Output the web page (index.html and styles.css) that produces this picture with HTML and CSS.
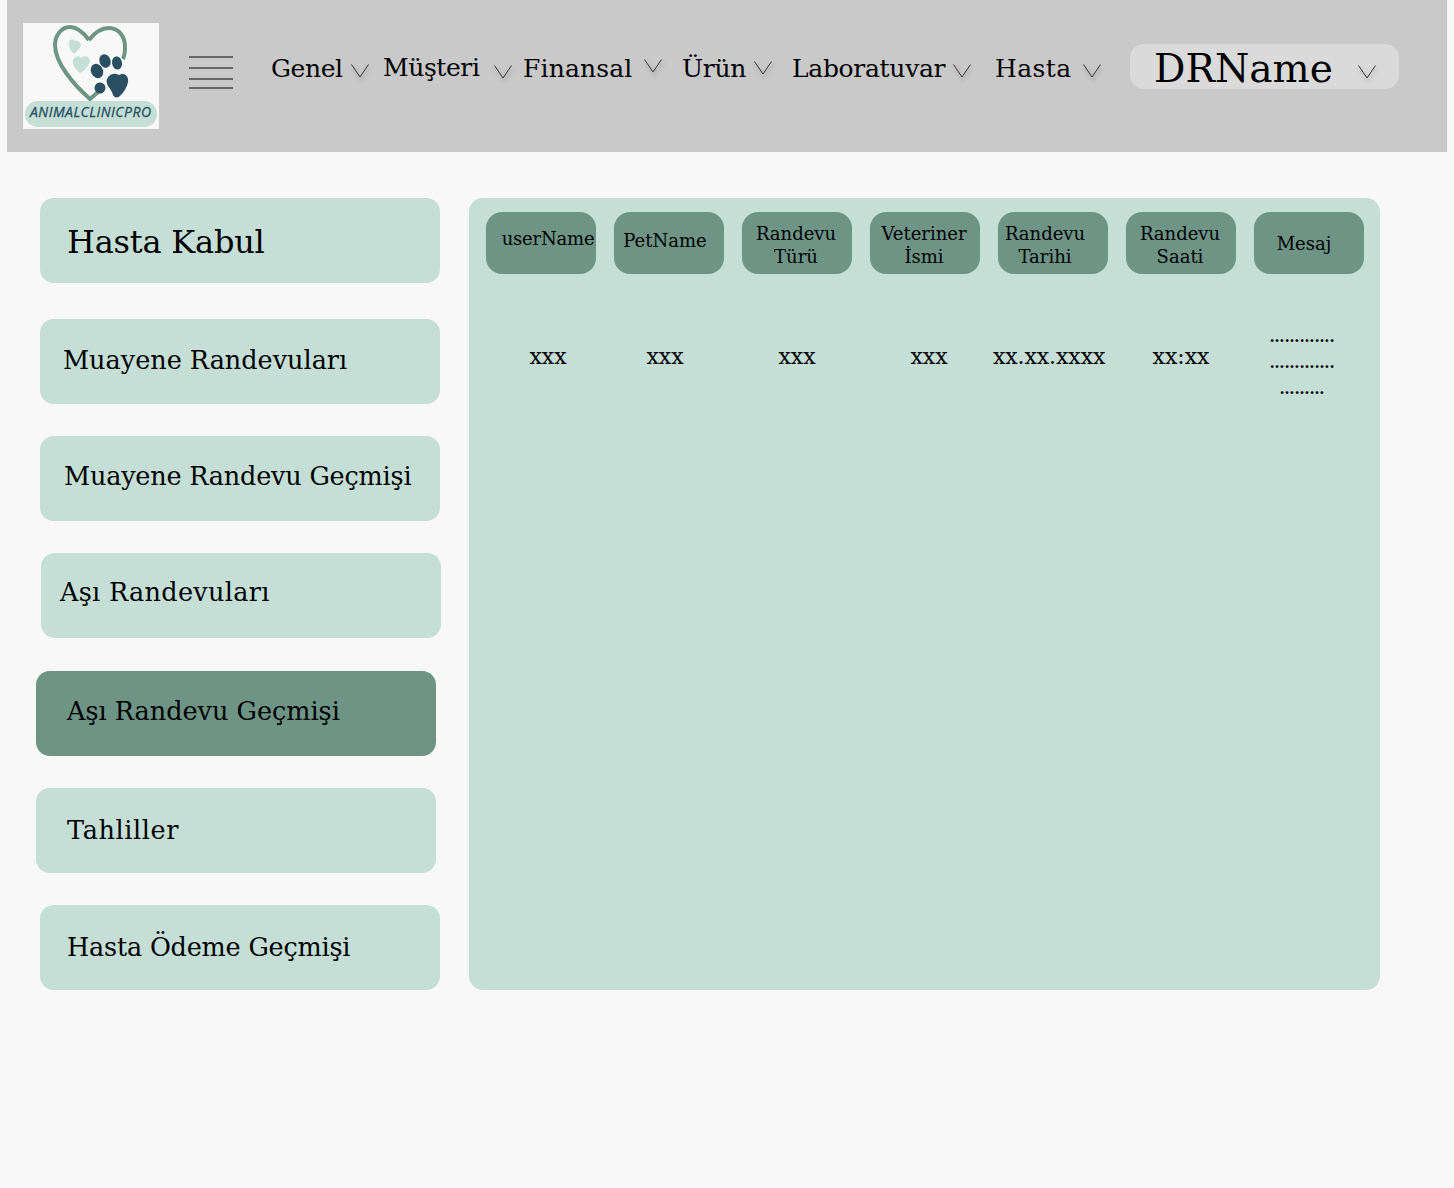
FILE: index.html
```html
<!DOCTYPE html>
<html lang="tr">
<head>
  <meta charset="UTF-8">
  <meta name="viewport" content="width=device-width, initial-scale=1.0">
  <title>AnimalClinicPro</title>
  <link rel="stylesheet" href="styles.css">
</head>
<body>
  <header class="topbar">
    <svg class="logo" width="136" height="106" viewBox="0 0 136 106">
      <rect width="136" height="106" fill="#f8f8f8"/>
      <path d="M66 17C60 9 54 4 47 4C38 4 32 13 32 22C32 40 51 62 67 76L75 69M66 17C72 9 79 5 86 5C96 5 102 14 102 24C102 28 102 32 100 36" fill="none" stroke="#6d9485" stroke-width="4"/>
      <path d="M51 31C47 27 45 23 46 19C47 16 50 16 52 18C54 17 57 18 58 21C58 25 54 28 51 31Z" fill="#c5dfd6"/>
      <path d="M57 50C52 46 49 41 50 37C51 33 56 32 58 35C61 32 66 33 67 37C67 42 62 47 57 50Z" fill="#c5dfd6"/>
      <ellipse cx="74" cy="48" rx="6" ry="7.5" transform="rotate(-25 74 48)" fill="#2a4f63"/>
      <ellipse cx="82" cy="38" rx="5.5" ry="7" transform="rotate(-20 82 38)" fill="#2a4f63"/>
      <ellipse cx="94" cy="40" rx="5" ry="6.5" transform="rotate(-10 94 40)" fill="#2a4f63"/>
      <ellipse cx="77" cy="65" rx="5.5" ry="5.5" transform="rotate(25 77 65)" fill="#2a4f63"/>
      <path d="M84 56C87 50 92 50 96 52C101 49 106 53 105 59C104 65 100 70 97 73C95 75 91 75 90 72C89 68 87 66 85 63C84 61 83 58 84 56Z" fill="#2a4f63"/>
      <rect x="2" y="78" width="132" height="26" rx="13" fill="#c5dfd6"/>
      <text class="logo-text" x="7" y="94" textLength="121" lengthAdjust="spacing">ANIMALCLINICPRO</text>
    </svg>
    <div class="burger"><span></span><span></span><span></span><span></span></div>
    <nav class="nav">
      <a class="nav-item genel">Genel<svg class="chev low" viewBox="0 0 18 14"><path d="M0.5 0.5L9 13L17.5 0.5"/></svg></a>
      <a class="nav-item musteri">Müşteri<svg class="chev lower" viewBox="0 0 18 14"><path d="M0.5 0.5L9 13L17.5 0.5"/></svg></a>
      <a class="nav-item finansal">Finansal<svg class="chev high" viewBox="0 0 18 14"><path d="M0.5 0.5L9 13L17.5 0.5"/></svg></a>
      <a class="nav-item urun">Ürün<svg class="chev" viewBox="0 0 18 14"><path d="M0.5 0.5L9 13L17.5 0.5"/></svg></a>
      <a class="nav-item lab">Laboratuvar<svg class="chev low" viewBox="0 0 18 14"><path d="M0.5 0.5L9 13L17.5 0.5"/></svg></a>
      <a class="nav-item hasta">Hasta<svg class="chev low" viewBox="0 0 18 14"><path d="M0.5 0.5L9 13L17.5 0.5"/></svg></a>
    </nav>
    <div class="user"><span class="user-name">DRName</span><svg class="chev user-chev" viewBox="0 0 18 14"><path d="M0.5 0.5L9 13L17.5 0.5"/></svg></div>
  </header>

  <div class="content">
    <aside class="side">
      <a class="side-item first">Hasta Kabul</a>
      <a class="side-item s2">Muayene Randevuları</a>
      <a class="side-item s3">Muayene Randevu Geçmişi</a>
      <a class="side-item s4">Aşı Randevuları</a>
      <a class="side-item s5 active">Aşı Randevu Geçmişi</a>
      <a class="side-item s6">Tahliller</a>
      <a class="side-item s7">Hasta Ödeme Geçmişi</a>
    </aside>
    <main class="panel">
      <div class="row heads">
        <div class="head h1">userName</div>
        <div class="head h2">PetName</div>
        <div class="head two h3">Randevu<br>Türü</div>
        <div class="head two h4">Veteriner<br>İsmi</div>
        <div class="head two h5">Randevu<br>Tarihi</div>
        <div class="head two h3">Randevu<br>Saati</div>
        <div class="head h7">Mesaj</div>
      </div>
      <div class="row cells">
        <div class="cell c1">xxx</div>
        <div class="cell c2">xxx</div>
        <div class="cell">xxx</div>
        <div class="cell c4">xxx</div>
        <div class="cell c5">xx.xx.xxxx</div>
        <div class="cell">xx:xx</div>
        <div class="cell msg">………….<br>………….<br>………</div>
      </div>
    </main>
  </div>
</body>
</html>
```

FILE: styles.css
```css
body { margin: 0; padding: 0 7px; background: #f8f8f8; color: #000; font-family: "DejaVu Serif", serif; height: 1188px; box-sizing: border-box; overflow: hidden; }
a { display: block; }

.topbar { display: flex; align-items: flex-start; height: 152px; background: #c9c9c9; padding: 23px 0 0 16px; box-sizing: border-box; }
.logo { flex: none; display: block; }
.logo-text { font-family: "Open Sans", sans-serif; font-style: italic; font-size: 14px; font-weight: 400; fill: #2a4f63; stroke: #2a4f63; stroke-width: .3; }

.burger { width: 44px; margin: 33px 0 0 30px; flex: none; }
.burger span { display: block; height: 2px; background: #666; margin-bottom: 9px; }
.burger span:nth-child(3) { margin-bottom: 7px; }

.nav { display: flex; margin: 29px 0 0 38px; width: 859px; flex: none; }
.nav-item { display: flex; align-items: flex-start; font-size: 25px; line-height: 33px; white-space: nowrap; }
.genel { width: 112px; letter-spacing: -.4px; }
.musteri { width: 140px; margin-top: -1px; letter-spacing: -.4px; }
.finansal { width: 159px; letter-spacing: .15px; }
.urun { width: 110px; letter-spacing: -.3px; }
.lab { width: 203px; letter-spacing: -.3px; }
.hasta { width: 135px; letter-spacing: .4px; }

.chev { width: 18px; height: 14px; flex: none; margin: 9px 0 0 8px; overflow: visible; filter: drop-shadow(1px 3px 2px rgba(0,0,0,.3)); }
.chev path { fill: none; stroke: #333; stroke-width: 1; }
.chev.low { margin-top: 12px; }
.chev.lower { margin-top: 14px; margin-left: 14px; }
.chev.high { margin-top: 7px; margin-left: 12px; }
.hasta .chev.low { margin-left: 11px; }

.user { display: flex; align-items: center; width: 269px; height: 45px; margin-top: 21px; padding-left: 24px; box-sizing: border-box; background: #dadada; border-radius: 14px; font-size: 39.2px; line-height: 45px; flex: none; }
.user-name { position: relative; top: 2px; }
.user-chev { margin: 10px 0 0 25px; }

.content { display: flex; align-items: flex-start; padding: 46px 0 0 33px; }

.side { width: 400px; flex: none; display: flex; flex-direction: column; }
.side-item { box-sizing: border-box; width: 400px; height: 85px; background: #c5dfd6; border-radius: 14px; font-size: 25.5px; line-height: 83px; padding-left: 24px; white-space: nowrap; }
.first { font-size: 32px; line-height: 88px; padding-left: 27px; letter-spacing: -.2px; }
.s2 { margin-top: 36px; padding-left: 23px; }
.s3 { margin-top: 32px; line-height: 81px; letter-spacing: -.2px; }
.s4 { margin-top: 32px; margin-left: 1px; padding-left: 19px; line-height: 79px; letter-spacing: .3px; }
.s5 { margin-top: 33px; margin-left: -4px; padding-left: 31px; line-height: 81px; }
.s6 { margin-top: 32px; margin-left: -4px; padding-left: 31px; line-height: 85px; letter-spacing: .6px; }
.s7 { margin-top: 32px; padding-left: 27px; line-height: 85px; letter-spacing: -.2px; }
.active { background: #6d9485; }

.panel { box-sizing: border-box; width: 911px; height: 792px; margin-left: 29px; padding: 14px 17px; background: #c5dfd6; border-radius: 14px; }
.row { display: grid; grid-template-columns: repeat(7, 110px); column-gap: 18px; }
.head { box-sizing: border-box; height: 62px; background: #6d9485; border-radius: 16px; display: flex; align-items: center; justify-content: center; text-align: center; font-size: 18px; line-height: 23px; white-space: nowrap; }
.two { padding-top: 4px; }
.h1 { padding: 0 0 10px 14px; letter-spacing: -.2px; }
.h2 { padding: 0 8px 6px 0; }
.h3 { padding-right: 2px; }
.h4 { padding-right: 2px; }
.h5 { padding-right: 16px; }
.h7 { padding-right: 10px; }

.cells { margin-top: 39px; align-items: start; }
.cell { text-align: center; font-size: 22px; line-height: 88px; white-space: nowrap; }
.c1 { padding-left: 14px; }
.c2 { padding-right: 8px; }
.c4 { padding-left: 8px; }
.c5 { margin-left: -5px; text-align: left; line-height: 87px; letter-spacing: -.1px; }
.msg { line-height: 26px; font-size: 15px; font-weight: bold; padding-top: 11px; padding-right: 14px; }
```
